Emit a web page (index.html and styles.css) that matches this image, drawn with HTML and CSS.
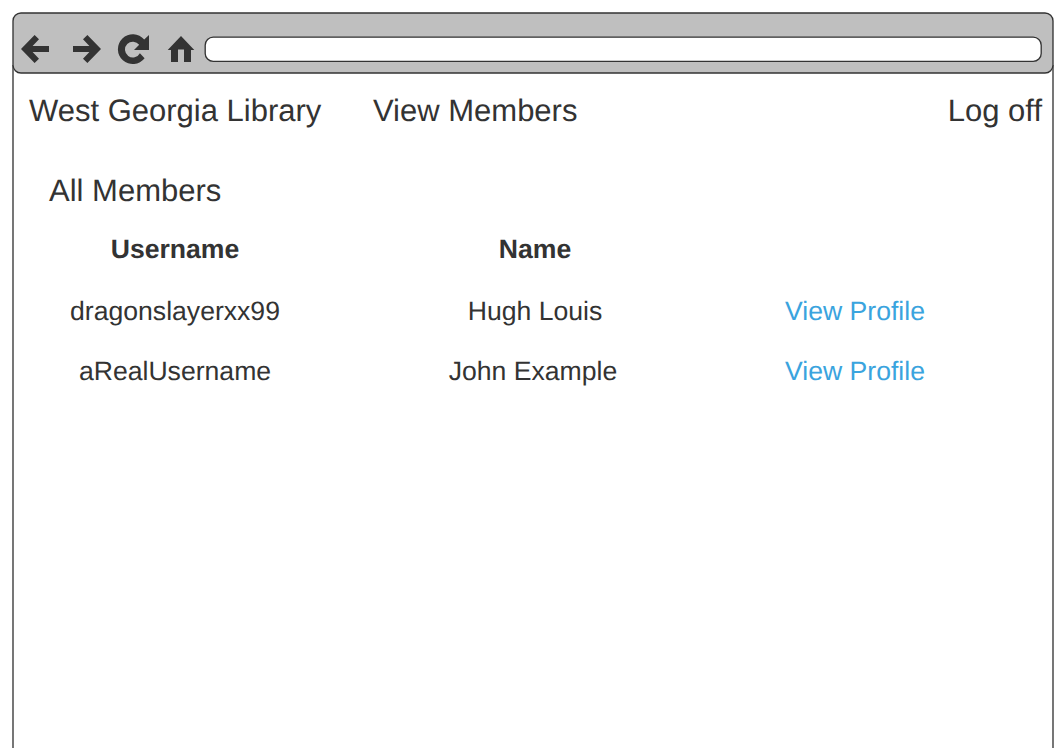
FILE: index.html
```html
<!DOCTYPE html>
<html lang="en">
<head>
<meta charset="utf-8">
<title>West Georgia Library</title>
<link rel="stylesheet" href="styles.css">
</head>
<body>
<div class="browser">
  <svg class="frame" width="1064" height="748" viewBox="0 0 1064 748" aria-hidden="true">
    <path class="outline" d="M13 65V748M1053 65V748"/>
    <rect class="bar" x="13" y="13" width="1040" height="60" rx="8"/>
    <rect class="field" x="205.200" y="37.200" width="836" height="24.200" rx="8"/>
  </svg>
  <header class="toolbar">
    <svg class="icon" width="30" height="30" viewBox="20 34 30 30"><path d="M21 49 34.600 35 39 39.300 32.600 46H49v6H32.600L39 58.700 34.600 63Z"/></svg>
    <svg class="icon" width="30" height="30" viewBox="72 34 30 30"><path d="M101 49 87.400 35 83 39.300 89.400 46H73v6H89.400L83 58.700 87.400 63Z"/></svg>
    <svg class="icon" width="33" height="32" viewBox="117 33 33 32"><path d="M149 35V50H134L139.200 44.800A7.900 7.900 0 1 0 139.900 53.200L144.600 58.300A14.900 14.900 0 1 1 144.200 39.600Z"/></svg>
    <svg class="icon" width="28" height="28" viewBox="167 35 28 28"><path d="M181 36 194.300 50H191V62H184V49.500H178V62H171V50H167.700Z"/></svg>
    <div class="address"></div>
  </header>
  <nav class="nav">
    <span class="brand">West Georgia Library</span>
    <span class="section">View Members</span>
    <span class="logoff">Log off</span>
  </nav>
  <main>
    <h1 class="title">All Members</h1>
    <table class="members">
      <colgroup><col class="c1"><col class="c2"><col class="c3"></colgroup>
      <thead><tr><th>Username</th><th>Name</th><th></th></tr></thead>
      <tbody>
        <tr><td>dragonslayerxx99</td><td>Hugh Louis</td><td><a class="link">View Profile</a></td></tr>
        <tr><td>aRealUsername</td><td class="shifted">John Example</td><td><a class="link">View Profile</a></td></tr>
      </tbody>
    </table>
  </main>
</div>
</body>
</html>
```
FILE: styles.css
```css
body {
  margin: 0;
  background: #fff;
  color: #333;
  font-family: "Liberation Sans", Arial, sans-serif;
  text-rendering: geometricPrecision;
}
.browser {
  position: relative;
  height: 748px;
  overflow: hidden;
}
.frame {
  position: absolute;
  inset: 0;
  stroke: #333;
  stroke-width: 1.33;
}
.outline { fill: none; }
.bar { fill: #bfbfbf; }
.field { fill: #fff; }
.toolbar {
  position: relative;
  display: flex;
  align-items: center;
  box-sizing: border-box;
  height: 73px;
  padding: 25px 23px 0 20px;
}
.icon { fill: #333; flex: none; }
.icon:nth-child(2) { margin-left: 22px; }
.icon:nth-child(3) { margin-left: 15px; }
.icon:nth-child(4) { margin-left: 17px; }
.address { flex: 1; height: 24px; margin-left: 10px; }
.nav {
  position: relative;
  display: flex;
  height: 36px;
  margin: 20px 22px 0 29px;
  font-size: 31px;
  line-height: 36px;
  white-space: nowrap;
}
.brand { width: 344px; }
.logoff { margin-left: auto; }
.title {
  position: relative;
  margin: 44px 0 0 49px;
  font-size: 31px;
  font-weight: normal;
  line-height: 36px;
}
.members {
  position: relative;
  margin: 10px 0 0 15px;
  width: 960px;
  table-layout: fixed;
  border-collapse: collapse;
  font-size: 26.6px;
  line-height: 30px;
  text-align: center;
}
.c1 { width: 320px; }
.c2 { width: 400px; }
.c3 { width: 240px; }
.members th { height: 60px; padding: 0; }
.members td { height: 56px; padding: 4px 0 0; }
.members .shifted { padding-right: 4px; }
.link { color: #3aa4de; }
```
